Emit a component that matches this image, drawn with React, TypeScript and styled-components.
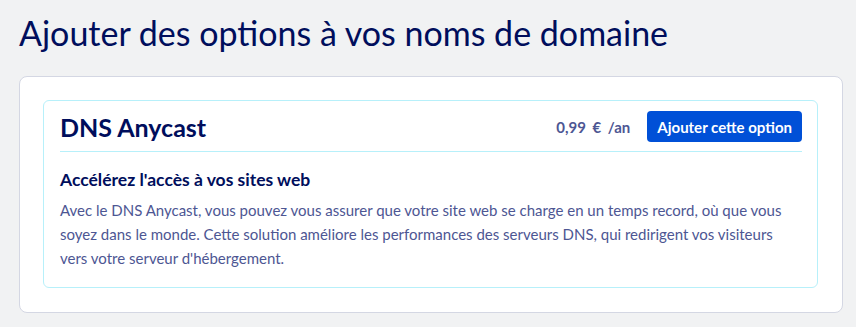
import React from "react";
import styled, { createGlobalStyle } from "styled-components";

const Global = createGlobalStyle`
  html, body { margin: 0; padding: 0; }
  body {
    background: #f1f2f3;
    font-family: Lato, "Noto Sans", sans-serif;
    color: #000e5c;
    width: 856px;
    height: 327px;
    overflow: hidden;
  }
`;

const Page = styled.div`
  padding: 9px 13px 0 19px;
  display: flex;
  flex-direction: column;
  gap: 19px;
`;

const Title = styled.h1`
  margin: 0;
  font-size: 34px;
  font-weight: 400;
  line-height: 48px;
  color: #000e5c;
`;

const Card = styled.div`
  background: #fff;
  border: 1px solid #d4d7e3;
  border-radius: 8px;
  padding: 23px 24px 24px 23px;
`;

const Option = styled.div`
  border: 1px solid #b7f0fa;
  border-radius: 6px;
  padding: 10px 15px 17px 16px;
`;

const Header = styled.div`
  display: flex;
  align-items: center;
  justify-content: space-between;
  border-bottom: 1px solid #b7f0fa;
  padding-bottom: 9px;
`;

const OptionName = styled.h2`
  margin: 0;
  font-size: 25px;
  font-weight: 700;
  color: #000e5c;
`;

const PriceBox = styled.div`
  display: flex;
  align-items: center;
  gap: 17px;
`;

const Price = styled.span`
  font-size: 15px;
  font-weight: 700;
  color: #4d5693;
  word-spacing: 3px;
`;

const Button = styled.button`
  background: #0050d7;
  color: #fff;
  border: none;
  border-radius: 4px;
  height: 31px;
  padding: 0 10px;
  font-family: inherit;
  font-size: 15px;
  font-weight: 700;
  cursor: pointer;
`;

const Subtitle = styled.h3`
  margin: 17px 0 8px;
  font-size: 17.5px;
  font-weight: 700;
  color: #000e5c;
`;

const Text = styled.p`
  margin: 0;
  font-size: 15px;
  line-height: 24px;
  color: #4d5693;
`;

export default function App() {
  return (
    <>
      <Global />
      <Page>
        <Title>Ajouter des options à vos noms de domaine</Title>
        <Card>
          <Option>
            <Header>
              <OptionName>DNS Anycast</OptionName>
              <PriceBox>
                <Price>0,99 € /an</Price>
                <Button>Ajouter cette option</Button>
              </PriceBox>
            </Header>
            <Subtitle>Accélérez l'accès à vos sites web</Subtitle>
            <Text>
              Avec le DNS Anycast, vous pouvez vous assurer que votre site web se charge en un temps record, où que vous
              soyez dans le monde. Cette solution améliore les performances des serveurs DNS, qui redirigent vos visiteurs
              vers votre serveur d'hébergement.
            </Text>
          </Option>
        </Card>
      </Page>
    </>
  );
}
